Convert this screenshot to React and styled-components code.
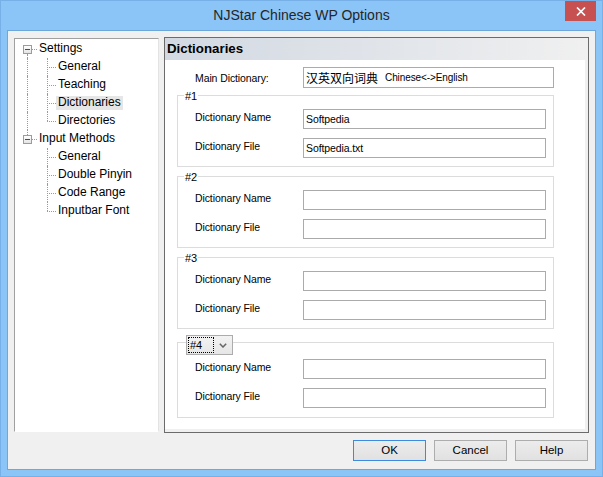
import React from 'react'
import styled, { createGlobalStyle } from 'styled-components'

const GlobalStyle = createGlobalStyle`
  html, body {
    margin: 0;
    padding: 0;
    background: #fff;
  }
  body {
    font-family: 'Liberation Sans', Arial, sans-serif;
    color: #000;
  }
`

const Window = styled.div`
  width: 603px;
  height: 477px;
  box-sizing: border-box;
  background: #8bc4f6;
  box-shadow: inset 0 0 0 1px #77b0e6;
  padding: 0 7px 7px;
  display: flex;
  flex-direction: column;
`

const TitleBar = styled.div`
  height: 30px;
  flex: none;
  display: grid;
  grid-template-columns: 1fr auto 1fr;
  align-items: start;
`

const Title = styled.div`
  grid-column: 2;
  font-size: 14px;
  line-height: 31px;
  color: #262626;
  white-space: nowrap;
`

const CloseButton = styled.div`
  grid-column: 3;
  justify-self: end;
  width: 31px;
  height: 20px;
  margin-top: 1px;
  background: #c75050;
  display: flex;
  align-items: center;
  justify-content: center;
`

const Client = styled.div`
  flex: 1;
  border: 1px solid #6fa7dc;
  background: #f0f0f0;
  padding: 6px 6px 0;
  display: flex;
  flex-direction: column;
`

const Body = styled.div`
  height: 396px;
  display: flex;
  gap: 5px;
`

const TreeBox = styled.div`
  width: 145px;
  margin: 1px 0;
  box-sizing: border-box;
  background: #fff;
  border-top: 1px solid #a0a0a0;
  border-left: 1px solid #a0a0a0;
  border-right: 1px solid #e3e3e3;
  border-bottom: 1px solid #ffffff;
  padding-top: 1px;
  font-size: 12px;
`

const TreeRow = styled.div`
  height: 18px;
  display: flex;
`

const Gutter = styled.div`
  position: relative;
  flex: none;
  width: ${p => p.$w}px;

  &::before {
    content: '';
    display: ${p => (p.$line ? 'block' : 'none')};
    position: absolute;
    left: ${p => p.$x}px;
    top: ${p => (p.$line === 'below' ? 14 : 0)}px;
    height: ${p => (p.$line === 'full' ? 18 : p.$line === 'half' ? 9 : p.$line === 'above' ? 5 : 4)}px;
    border-left: 1px dotted #9a9a9a;
  }

  &::after {
    content: '';
    display: ${p => (p.$branch ? 'block' : 'none')};
    position: absolute;
    left: ${p => p.$branch && p.$branch[0]}px;
    width: ${p => p.$branch && p.$branch[1]}px;
    top: 9px;
    border-top: 1px dotted #9a9a9a;
  }
`

const ExpandBox = styled.div`
  position: absolute;
  left: 8px;
  top: 5px;
  width: 9px;
  height: 9px;
  box-sizing: border-box;
  border: 1px solid #9c9c9c;
  background: linear-gradient(#ffffff, #e4e4e4);
  display: flex;
  align-items: center;
  justify-content: center;

  &::after {
    content: '';
    width: 5px;
    height: 1px;
    background: #2d4f8f;
  }
`

const NodeLabel = styled.span`
  align-self: flex-start;
  margin-top: 2px;
  height: 14px;
  line-height: 13px;
  padding: 0 2px;
  white-space: nowrap;
  background: ${p => (p.$selected ? '#e6e6e6' : 'transparent')};
`

const Panel = styled.div`
  width: 425px;
  box-sizing: border-box;
  border: 1px solid #6b6b6b;
  background: #f0f0f0;
  display: flex;
  flex-direction: column;
`

const PanelHeader = styled.div`
  height: 22px;
  line-height: 22px;
  padding-left: 2px;
  font-size: 13.3px;
  font-weight: bold;
  background: linear-gradient(to right, #d2d9e2 0%, #dfe3e9 45%, #f0f0f0 100%);
`

const PanelBody = styled.div`
  width: 420px;
  height: 369px;
  box-sizing: border-box;
  background: #fff;
  padding: 7px 0 0 12px;
  font-size: 10.5px;
`

const MainRow = styled.div`
  margin-left: 18px;
  display: grid;
  grid-template-columns: 108px 251px;
  align-items: center;
`

const Group = styled.div`
  position: relative;
  width: 377px;
  box-sizing: border-box;
  border: 1px solid #dcdcdc;
  margin-top: ${p => p.$gap}px;
  padding: ${p => (p.$tall ? '16px 7px 9px 17px' : '13px 7px 8px 17px')};
  display: grid;
  grid-template-columns: 108px 243px;
  row-gap: 9px;
`

const Legend = styled.span`
  position: absolute;
  top: -7px;
  left: 6px;
  padding: 0 1px;
  line-height: 14px;
  font-size: 11px;
  background: #fff;
`

const Label = styled.span`
  align-self: ${p => (p.$center ? 'center' : 'start')};
  line-height: 16px;
  letter-spacing: -0.1px;
  white-space: nowrap;
`

const Field = styled.div`
  height: ${p => (p.$h ? p.$h : 20)}px;
  box-sizing: border-box;
  border: 1px solid #ababab;
  background: #fff;
  padding: 0 2px;
  display: flex;
  align-items: center;
  white-space: nowrap;
  letter-spacing: -0.1px;
`

const Cjk = styled.span`
  font-family: 'Noto Sans CJK SC', sans-serif;
  font-size: 12px;
  letter-spacing: 0;
  margin-right: 7px;
`

const Latin = styled.span`
  font-size: 10px;
`

const Combo = styled.div`
  position: absolute;
  top: -8px;
  left: 8px;
  width: 47px;
  height: 20px;
  box-sizing: border-box;
  border: 1px solid #acacac;
  background: linear-gradient(#f3f3f3, #e6e6e6);
  padding: 1px;
  display: flex;
  align-items: center;
`

const FocusBox = styled.div`
  width: 26px;
  height: 16px;
  box-sizing: border-box;
  border: 1px dotted #000;
  font-size: 11px;
  line-height: 14px;
  padding-left: 1px;
`

const Chevron = styled.div`
  flex: 1;
  display: flex;
  justify-content: center;
  padding-top: 1px;
`

const ButtonRow = styled.div`
  margin-top: 7px;
  padding-right: 1px;
  display: flex;
  justify-content: flex-end;
  gap: 8px;
`

const Button = styled.div`
  width: 73px;
  height: 21px;
  box-sizing: border-box;
  border: 1px solid ${p => (p.$default ? '#3c8be0' : '#adadad')};
  background: linear-gradient(#ececec, #e1e1e1);
  font-size: 11.5px;
  line-height: 19px;
  text-align: center;
`

const tree = [
  { label: 'Settings', children: ['General', 'Teaching', 'Dictionaries', 'Directories'] },
  { label: 'Input Methods', children: ['General', 'Double Pinyin', 'Code Range', 'Inputbar Font'] },
]

const groups = [
  { id: '#1', name: 'Softpedia', file: 'Softpedia.txt', gap: 7 },
  { id: '#2', name: '', file: '', gap: 9 },
  { id: '#3', name: '', file: '', gap: 9 },
  { id: '#4', name: '', file: '', gap: 13, combo: true },
]

const Tree = () => (
  <TreeBox>
    {tree.map((node, i) => {
      const hasNext = i < tree.length - 1
      const rootLine = i > 0 ? 'above' : hasNext ? 'below' : null
      return (
        <React.Fragment key={node.label}>
          <TreeRow>
            <Gutter $w={22} $x={12} $line={rootLine} $branch={[17, 5]}>
              <ExpandBox />
            </Gutter>
            <NodeLabel>{node.label}</NodeLabel>
          </TreeRow>
          {node.children.map((child, j) => (
            <TreeRow key={child + j}>
              <Gutter $w={17} $x={12} $line={hasNext ? 'full' : null} />
              <Gutter
                $w={24}
                $x={15}
                $line={j < node.children.length - 1 ? 'full' : 'half'}
                $branch={[15, 9]}
              />
              <NodeLabel $selected={i === 0 && child === 'Dictionaries'}>{child}</NodeLabel>
            </TreeRow>
          ))}
        </React.Fragment>
      )
    })}
  </TreeBox>
)

const App = () => {
  return (
    <>
      <GlobalStyle />
      <Window>
        <TitleBar>
          <Title>NJStar Chinese WP Options</Title>
          <CloseButton>
            <svg width="10" height="9" viewBox="0 0 10 9">
              <path d="M1 0.5 L9 8.5 M9 0.5 L1 8.5" stroke="#fff" strokeWidth="1.7" />
            </svg>
          </CloseButton>
        </TitleBar>
        <Client>
          <Body>
            <Tree />
            <Panel>
              <PanelHeader>Dictionaries</PanelHeader>
              <PanelBody>
                <MainRow>
                  <Label $center>Main Dictionary:</Label>
                  <Field $h={21}>
                    <Cjk>汉英双向词典</Cjk>
                    <Latin>Chinese&lt;-&gt;English</Latin>
                  </Field>
                </MainRow>
                {groups.map(g => (
                  <Group key={g.id} $gap={g.gap} $tall={g.combo}>
                    {g.combo ? (
                      <Combo>
                        <FocusBox>{g.id}</FocusBox>
                        <Chevron>
                          <svg width="8" height="5" viewBox="0 0 8 5">
                            <path d="M0.8 0.8 L4 4 L7.2 0.8" fill="none" stroke="#666" strokeWidth="1.5" />
                          </svg>
                        </Chevron>
                      </Combo>
                    ) : (
                      <Legend>{g.id}</Legend>
                    )}
                    <Label>Dictionary Name</Label>
                    <Field>{g.name}</Field>
                    <Label>Dictionary File</Label>
                    <Field>{g.file}</Field>
                  </Group>
                ))}
              </PanelBody>
            </Panel>
          </Body>
          <ButtonRow>
            <Button $default>OK</Button>
            <Button>Cancel</Button>
            <Button>Help</Button>
          </ButtonRow>
        </Client>
      </Window>
    </>
  )
}

export default App
